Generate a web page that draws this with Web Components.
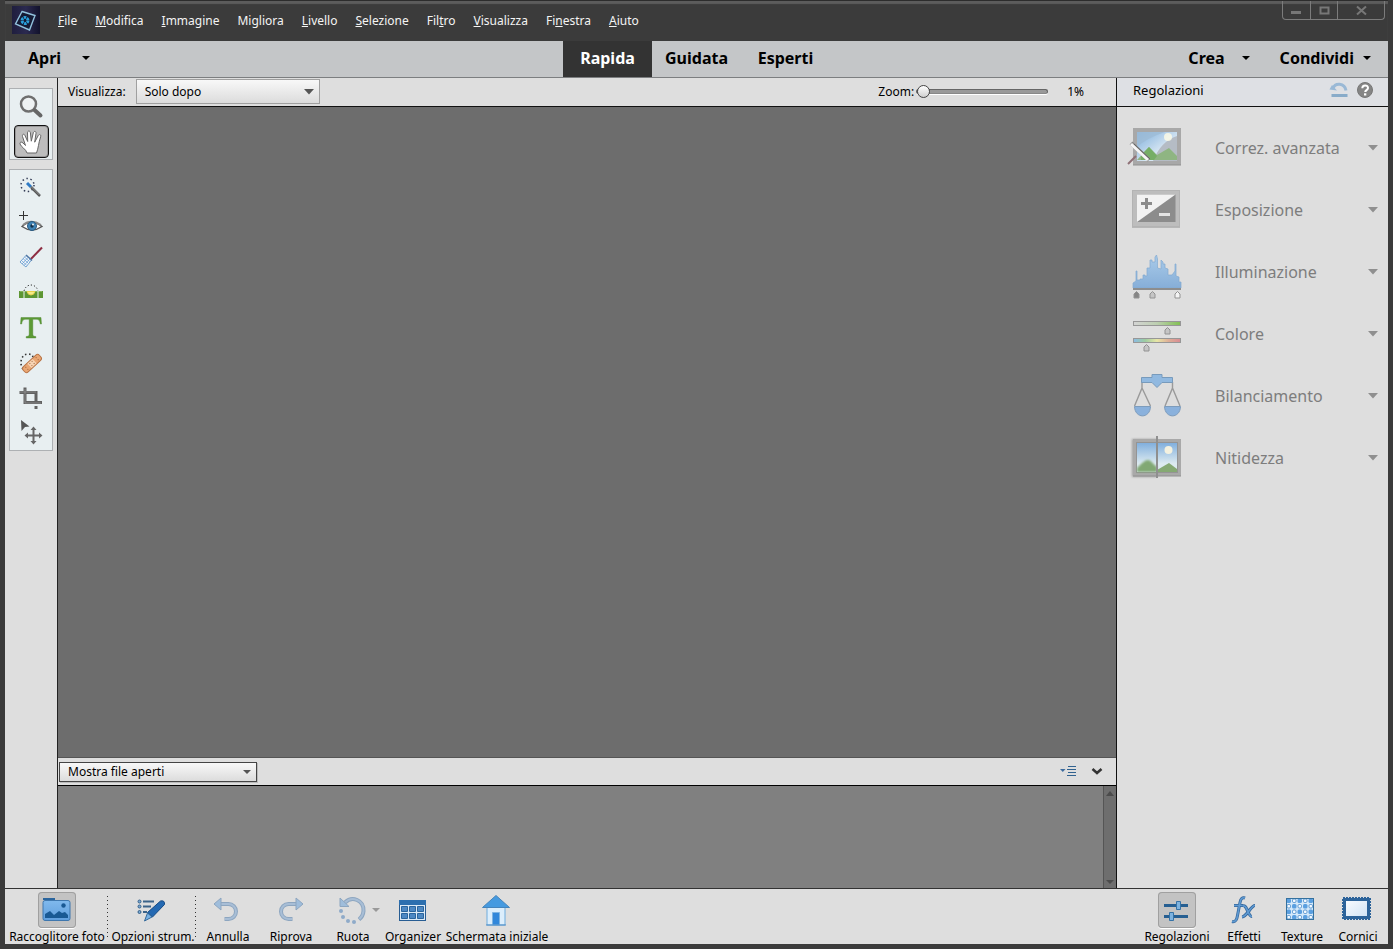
<!DOCTYPE html>
<html lang="it">
<head>
<meta charset="utf-8">
<title>Editor foto</title>
<style>
  html, body { margin: 0; height: 100%; }
  body { background: #3b3b3b; font-family: "Noto Sans", "Open Sans", sans-serif; font-size: 12px; line-height: 16px; color: #000; }
</style>
</head>
<body>
<editor-window></editor-window>

<script>
/* setup runs on the cloned template before it is attached */
const define = (tag, html, setup) => {
  const tpl = document.createElement('template');
  tpl.innerHTML = html;
  customElements.define(tag, class extends HTMLElement {
    connectedCallback() {
      if (this.shadowRoot) return;
      const content = tpl.content.cloneNode(true);
      if (setup) setup(this, content);
      this.attachShadow({ mode: 'open' }).append(content);
    }
  });
};

/* ---------- icons: [width, height, markup] ---------- */
const frame = (x, y, fill) => `<rect x="${x}" y="${y}" width="48" height="37" fill="${fill}"/><path d="M${x} ${y + 37}h48" stroke="#909090"/>`;
const peg = (x, y, fill) => `<path d="M${x - 2.5} ${y + 6.5}v-4l2.500-2.500 2.500 2.500v4z" fill="${fill}" stroke="#929292"/>`;
const ICONS = {
  logo: [28, 28, `<defs><linearGradient id="g" x2="1" y2="0"><stop stop-color="#1f1e3e"/><stop offset=".5" stop-color="#2b2a50"/><stop offset="1" stop-color="#12122c"/></linearGradient></defs><rect width="28" height="28" fill="url(#g)"/><path d="M10 5.500l13 4-5.500 14.500-14-6z" fill="#151b35" stroke="#92c3de" stroke-width="1.400"/><circle cx="13" cy="14.500" r="3" fill="none" stroke="#2aa0dc" stroke-width="3" stroke-dasharray="2.400 .74"/>`],
  caret: [8, 4, `<path d="M0 0h8L4 4z" fill="currentColor"/>`],
  caretBig: [10, 6, `<path d="M0 0h10L5 5.500z" fill="currentColor"/>`],
  caretUp: [8, 5, `<path d="M0 5h8L4 0z" fill="currentColor"/>`],
  min: [11, 9, `<rect y="5" width="10" height="3" fill="#777"/>`],
  max: [11, 9, `<rect x="1.500" y="1.500" width="8" height="6" fill="none" stroke="#777" stroke-width="2"/>`],
  close: [11, 9, `<path d="M1 .5l9 8M10 .5l-9 8" stroke="#777" stroke-width="2"/>`],
  lens: [26, 26, `<circle cx="10.500" cy="10" r="7.500" fill="#eef2f3" stroke="#6f6f6f" stroke-width="2.500"/><path d="M16.500 16l6 5.500" stroke="#666" stroke-width="4" stroke-linecap="round"/>`],
  hand: [26, 26, `<path d="M9 24c-1-4-6-6-7-9-.6-2 1.600-2.600 3-1l2.500 2.500L4.500 7.500c-.5-2.500 1.700-3 2.500-1l2.700 6L9.500 4c0-2.600 2.600-2.600 2.900-.2l.9 8.400 2-8.400c.7-2.300 3-1.600 2.700.5l-1.300 8.900 3.500-6.600c1.200-2 3.200-.8 2.400 1.200C20.500 14 20.500 19 18.500 24z" fill="#fff" stroke="#666"/>`],
  quick: [26, 26, `<circle cx="9.500" cy="10" r="6.500" fill="none" stroke="#333b55" stroke-width="1.500" stroke-dasharray="1.500 2.600"/><path d="M9 8l4 4" stroke="#2f7ac4" stroke-width="3"/><path d="M13 12l9 9" stroke="#555" stroke-width="2.500"/><path d="M13.500 12l8 8" stroke="#aaa" stroke-width=".7"/>`],
  eye: [26, 26, `<path d="M1 5.500h9M5.500 1v9" stroke="#333"/><path d="M4 16.500Q13 8 24 16.500 14 23.500 4 16.500z" fill="#fff" stroke="#555" stroke-width="1.400"/><path d="M5 15Q13 8.500 23 15" fill="none" stroke="#888" stroke-width="2"/><circle cx="14" cy="16" r="4.500" fill="#3f83b5" stroke="#2b5c82"/><circle cx="14" cy="16" r="1.700" fill="#12304a"/><circle cx="15" cy="14.500" r=".9" fill="#fff"/>`],
  brush: [26, 26, `<path d="M11 16L24 2.500" stroke="#8e2d42" stroke-width="2"/><path d="M2 17l6-6.500 5.500 4.500L8 22z" fill="#f4f8fc" stroke="#75a5d0"/><path d="M3.500 15.500l5 4.500M5 13.500l5 4.500M6.500 12l5 4.500M4 19l6-6.500M6 20.500l6-6.500" stroke="#6ca0d2" stroke-width=".8"/><path d="M8 10l6 5.500" stroke="#5177a5" stroke-width="1.500"/>`],
  level: [26, 26, `<path d="M6 11C8 3 18 3 20 11" fill="none" stroke="#333" stroke-dasharray="1.200 2"/><path d="M1 11h24v7H1z" fill="#5d9633"/><path d="M2 11.500h22" stroke="#86b45c"/><path d="M6 11v7M20 11v7" stroke="#e8efef"/><path d="M9 11.500h8q-1 3.500-4 3.500t-4-3.500z" fill="#f6ea8a" stroke="#e9d24d"/>`],
  type: [26, 26, `<path d="M3 2.500h20l.5 6.500h-1.200C21.800 5.500 21 4.300 18 4.300h-3.200V19c0 2 1 2.300 3 2.500V23H8.200v-1.500c2-.2 3-.5 3-2.500V4.300H8C5 4.300 4.200 5.500 3.700 9H2.500z" fill="#5c9a35" stroke="#46822a" stroke-width=".4"/>`],
  heal: [26, 26, `<path d="M5 19C1 14 3 4 10 4q4 0 5 3" fill="none" stroke="#333" stroke-width="1.600" stroke-dasharray="1.500 2.500"/><g transform="rotate(-43 14 13.500)"><rect x="3" y="10" width="22" height="7" rx="2.500" fill="#e9a673" stroke="#b87344"/><rect x="10.500" y="10.500" width="7" height="6" fill="#f7d4b4"/><path d="M12 12h1m2 0h1m-4 3h1m2 0h1M6.500 12h1m-1 3h1m13-3h1m-1 3h1" stroke="#9a633c"/></g>`],
  crop: [26, 26, `<path d="M1.500 7.500h16.500v10M7 2.500v15h17" fill="none" stroke="#626262" stroke-width="3"/><path d="M18 21v3" stroke="#626262" stroke-width="3"/><path d="M2 7h16M7 4v14h16" fill="none" stroke="#999" stroke-width=".7"/>`],
  move: [26, 26, `<path d="M3 0l8.500 6.500-4.500.5L3.500 11z" fill="#555"/><path d="M15.500 8v15M8 15.500h15" stroke="#666" stroke-width="2"/><path d="M12.500 10l3-3.500 3 3.500zM12.500 21l3 3.500 3-3.500zM10 12.500L6.500 15.500l3.500 3zM21 12.500l3.500 3-3.500 3z" fill="#666"/>`],
  reset: [20, 16, `<path d="M4 6.500C6 .5 15.500 .5 17 8.500" fill="none" stroke="#9ab9d6" stroke-width="3"/><path d="M.5 7.500L3 3l5 5.500z" fill="#9ab9d6"/><path d="M2.500 13.500h16" stroke="#88abc9" stroke-width="3"/>`],
  help: [16, 16, `<circle cx="8" cy="8" r="7.500" fill="#858585" stroke="#777"/><path d="M5.300 6.200C5.300 2.500 11 2.600 11 6c0 2-2.800 2.200-2.800 4" fill="none" stroke="#fff" stroke-width="2"/><rect x="7" y="11.300" width="2.300" height="2.200" fill="#fff"/>`],
  smart: [60, 50, `<defs><linearGradient id="s" x2="1" y2="1"><stop stop-color="#7daedb"/><stop offset=".6" stop-color="#d5e5f2"/></linearGradient></defs>${frame(6, 5, '#a8a8a8')}<rect x="10" y="9" width="40" height="29" fill="url(#s)"/><path d="M10 9h28Q20 15 10 24z" fill="#9dbbd6" opacity=".8"/><path d="M50 13Q34 18 26 38h24z" fill="#b5bcc5"/><circle cx="41" cy="14" r="4" fill="#fffce6" opacity=".8"/><path d="M10 37l12-13 8 8 12-7 8 8v4z" fill="#8fb582"/><path d="M14 32l8-8 8 9-3 4H14z" fill="#76ae66"/><path d="M1 41l8-8" stroke="#8f7076" stroke-width="2"/><path d="M4 20l18 17" stroke="#8b8b8b" stroke-width="4"/><path d="M4 21l17 16" stroke="#f6f6f6" stroke-width="3"/><path d="M7 21l16 15" stroke="#666"/>`],
  exposure: [60, 50, `${frame(5, 5, '#bdbdbd')}<rect x="5.500" y="5.500" width="47" height="36" fill="none" stroke="#b3b3b3"/><path d="M10 9.500h38.500V37H10z" fill="#8c8c8c"/><path d="M10 9.500h38.500L10 37z" fill="#f2f2f2"/><path d="M14 18.500h11M19.500 13v11" stroke="#8c8c8c" stroke-width="3"/><path d="M32 29.500h11" stroke="#e4e4e4" stroke-width="3"/>`],
  lighting: [60, 50, `<defs><linearGradient id="l" x2="0" y2="1"><stop stop-color="#a9cbe9"/><stop offset="1" stop-color="#86aed8"/></linearGradient></defs><path d="M6 41V36L9 34V24H10V33H13V32H16V28H18V29H20V21H23V13H25V15H28V10L29.500 8L30.500 12V21L34 22V13L36 15V17H38V21L41 22V28H45L48 24V17H49V29L52 30V35H54V41Z" fill="url(#l)" stroke="#83abd1" stroke-width=".7"/><path d="M6 42h48" stroke="#8d8d8d" stroke-width="2"/>${peg(9.5, 44.5, '#858585')}${peg(25.5, 44.5, '#c5c5c5')}${peg(50.5, 44.5, '#f5f5f5')}`],
  color: [60, 50, `<defs><linearGradient id="a"><stop stop-color="#d4d4d4"/><stop offset=".5" stop-color="#bdcfb1"/><stop offset="1" stop-color="#82c052"/></linearGradient><linearGradient id="b"><stop stop-color="#8bbbe5"/><stop offset=".25" stop-color="#9dcca0"/><stop offset=".5" stop-color="#e8e6a6"/><stop offset=".75" stop-color="#deae97"/><stop offset="1" stop-color="#d98b93"/></linearGradient></defs><rect x="6.500" y="12.500" width="47" height="4" fill="url(#a)" stroke="#979797"/>${peg(40.5, 18.5, '#c5c5c5')}<rect x="6.500" y="29.500" width="47" height="4" fill="url(#b)" stroke="#979797"/>${peg(19.5, 35.5, '#c5c5c5')}`],
  balance: [60, 50, `<path d="M15 11v6L7.500 35M15 17l8.500 18M45.500 11v6L38 35M45.500 17L53 35" fill="none" stroke="#9a9a9a" stroke-width="1.400"/><path d="M14.500 6.500H25v-3h10v3h10.500v5H35l-5 5-5-5H14.500z" fill="#91b9e0" stroke="#789bbc"/><path d="M7.500 35.500h16c-.5 12.500-15.500 12.500-16 0zM37.500 35.500h16c-.5 12.500-15.500 12.500-16 0z" fill="#8ab1dc" stroke="#7d9cbc"/>`],
  sharpen: [60, 50, `<defs><linearGradient id="n" x2="0" y2="1"><stop stop-color="#7faedd"/><stop offset=".7" stop-color="#dceaf0"/></linearGradient><filter id="f"><feGaussianBlur stdDeviation="1"/></filter></defs><rect x="5" y="6" width="25" height="38" fill="#a0a0a0" filter="url(#f)"/>${frame(6, 6, '#a9a9a9')}<rect x="9.500" y="9.500" width="41" height="30" fill="url(#n)" stroke="#949494"/><path d="M10 39v-4c5-5 8-8 11-8s5 4 9 7v5z" fill="#81a873" filter="url(#f)"/><path d="M30 39v-2l12-7 8 6v3z" fill="#85a973"/><circle cx="41.500" cy="17" r="4" fill="#f4f1df"/><path d="M30 3v42" stroke="#8f8f8f" stroke-width="2"/>`],
  list: [18, 14, `<path d="M0 4h5.500L2.800 7z" fill="#3d6b9d"/><path d="M8 1.500h8M7 4.500h9M8 7.500h8M7 10.500h9" stroke="#31628f"/>`],
  chevron: [12, 8, `<path d="M1.500 1L6 5l4.500-4" fill="none" stroke="#333" stroke-width="2.500"/>`],
  bin: [38, 36, `<defs><linearGradient id="p" x2="0" y2="1"><stop stop-color="#80b9ed"/><stop offset="1" stop-color="#5f9edd"/></linearGradient></defs><path d="M5 8V6h12v2" fill="#2b659d"/><rect x="5" y="8.500" width="27" height="20" rx="2" fill="url(#p)" stroke="#3f77ae"/><path d="M7 26v-4l5-3 4 4 5-4 3 2 3-1 3 3v3z" fill="#195994"/><circle cx="25.500" cy="13.500" r="2.200" fill="#195994"/>`],
  options: [38, 36, `<g fill="#79a9d3" stroke="#345f89"><circle cx="5.500" cy="9.500" r="1.500"/><circle cx="5.500" cy="14.500" r="1.500"/><circle cx="5.500" cy="20" r="1.500"/></g><path d="M9 9.500h11M9 14.500h8M9 20h4" stroke="#3b6389" stroke-width="2"/><path d="M13.500 20.500L26.500 9q4.500-1 4 3.500L18.500 25z" fill="#2469b2" stroke="#164a83"/><path d="M13.500 21l4.500 4-7.500 4z" fill="#79b2e4" stroke="#33689a"/>`],
  undo: [38, 36, `<path d="M11 12h8.500a7.500 7.500 0 0 1 0 15h-4" fill="none" stroke="#8da6c0" stroke-width="4"/><path d="M11 12h8.500a7.500 7.500 0 0 1 0 15h-3.500" fill="none" stroke="#a8bed6" stroke-width="2"/><path d="M5 12L12 6v12z" fill="#9fbddb" stroke="#8da6c0"/>`],
  redo: [38, 36, `<path d="M25 12h-8.500a7.500 7.500 0 0 0 0 15h4" fill="none" stroke="#8da6c0" stroke-width="4"/><path d="M25 12h-8.500a7.500 7.500 0 0 0 0 15h3.500" fill="none" stroke="#a8bed6" stroke-width="2"/><path d="M31 12L24 6v12z" fill="#9fbddb" stroke="#8da6c0"/>`],
  rotate: [38, 36, `<path d="M11 10.500C18 3.500 30 8 29.500 19c-.3 4-2 6.500-4.500 8.500" fill="none" stroke="#8da6c0" stroke-width="4"/><path d="M11 10.500C18 3.500 30 8 29.500 19c-.3 4-2 6-4 8" fill="none" stroke="#a8bed6" stroke-width="2"/><path d="M6 6v8.500h9z" fill="#9fbddb" stroke="#8da6c0"/><g fill="#8fabc9"><circle cx="7" cy="19" r="2"/><circle cx="9" cy="25" r="2"/><circle cx="14" cy="29" r="2"/><circle cx="20" cy="30" r="2"/></g>`],
  organizer: [38, 36, `<rect x="5.500" y="8.500" width="26" height="20" fill="#dceaf6" stroke="#285d93"/><path d="M5 8h27v5H5z" fill="#2c6faf"/><g fill="#4d88c3" stroke="#2a659d"><path d="M7.500 14.500h6v5h-6zM15.500 14.500h6v5h-6zM23.500 14.500h6v5h-6zM7.500 21.500h6v5h-6zM15.500 21.500h6v5h-6zM23.500 21.500h6v5h-6z"/></g>`],
  home: [38, 36, `<path d="M9 15h18v18H9z" fill="#dceefc" stroke="#6eacdd"/><path d="M18 3.500L4.500 15.500h27z" fill="#459ae0" stroke="#4584bb"/><path d="M14.500 20.500h7V33h-7z" fill="#3187da" stroke="#7eb4e2"/><path d="M8 33h20" stroke="#4e8dc6"/>`],
  sliders: [38, 36, `<path d="M6 13.500h24M6 24.500h24" stroke="#265f92" stroke-width="3"/><path d="M18.500 9.500h4v8h-4zM11.500 20.500h4v8h-4z" fill="#7db2df" stroke="#3673a7"/>`],
  fx: [38, 36, `<path d="M7 29.500c4 1 5-3 5.500-6L15 10.500c.7-4 2.500-5.500 5-4.500M9 13.500h9" fill="none" stroke="#33659a" stroke-width="3"/><path d="M7 29.500c4 1 5-3 5.500-6L15 10.500c.7-4 2.500-5.500 5-4.500M9 13.500h9" fill="none" stroke="#5f9ad2" stroke-width="1.600"/><path d="M18 14c4-2 5 11 9 10.500M30 13.500c-4 0-8 11-13 11.500" fill="none" stroke="#33659a" stroke-width="3.200"/><path d="M18 14c4-2 5 11 9 10.500M30 13.500c-4 0-8 11-13 11.500" fill="none" stroke="#5f9ad2" stroke-width="1.700"/>`],
  texture: [38, 36, `<defs><pattern id="t" x="3" y="6" width="11" height="11" patternUnits="userSpaceOnUse"><rect width="11" height="11" fill="#d5e9fa"/><rect x=".5" y=".5" width="4.500" height="4.500" rx="1.500" fill="#5a9fe0"/><rect x="6" y="6" width="4.500" height="4.500" rx="1.500" fill="#5a9fe0"/><g fill="#f4faff" stroke="#5795d0"><rect x="6.500" y="1" width="3.500" height="3.500" rx="1.200"/><rect x="1" y="6.500" width="3.500" height="3.500" rx="1.200"/></g></pattern></defs><rect x="3.500" y="6.500" width="27" height="21" fill="url(#t)" stroke="#34719f"/>`],
  frame: [38, 36, `<defs><linearGradient id="r" x2="1" y2="1"><stop stop-color="#fafcff"/><stop offset="1" stop-color="#cfe2f4"/></linearGradient></defs><rect x="5.500" y="7.500" width="24" height="18" fill="url(#r)" stroke="#2c639a" stroke-width="3"/><rect x="4" y="6" width="27" height="21" fill="none" stroke="#2c639a" stroke-width="2" stroke-dasharray="2 1"/>`]
};

define('ui-icon', `<style>:host{display:block;flex:none;line-height:0}svg{display:block;overflow:visible}</style>`, (el, root) => {
  const [w, h, body] = ICONS[el.getAttribute('name')];
  const art = document.createElement('template');
  art.innerHTML = `<svg width="${w}" height="${h}" viewBox="0 0 ${w} ${h}" aria-hidden="true">${body}</svg>`;
  root.append(art.content);
});

define('menu-bar', `<style>
  :host{display:flex;align-items:flex-start;height:41px;box-sizing:border-box;background:#3b3b3b;border-top:1px solid #2c2c2c;box-shadow:inset 0 3px 1px #5c5c5c;padding:0 3px 0 7px}
  ui-icon{margin-top:5px}
  nav{display:flex;gap:18px;flex:1;padding:12px 0 0 18px}
  a{color:#f4f4f4;text-decoration:none}
  .win{display:flex;border:1px solid #7c7c7c;border-top:0;border-radius:0 0 4px 4px;height:18px}
  .win button{all:unset;display:flex;align-items:center;justify-content:center;width:27px}
  .win button:last-child{width:46px}
  .win button+button{border-left:1px solid #7c7c7c;width:26px}
  .win ui-icon{margin:0}
</style>
<ui-icon name="logo"></ui-icon>
<nav aria-label="Menu">
<a href="#"><u>F</u>ile</a><a href="#"><u>M</u>odifica</a><a href="#"><u>I</u>mmagine</a><a href="#">Mi<u>g</u>liora</a><a href="#"><u>L</u>ivello</a><a href="#"><u>S</u>elezione</a><a href="#">Fil<u>t</u>ro</a><a href="#"><u>V</u>isualizza</a><a href="#">Fi<u>n</u>estra</a><a href="#"><u>A</u>iuto</a>
</nav>
<div class="win"><button aria-label="Riduci"><ui-icon name="min"></ui-icon></button><button aria-label="Ingrandisci"><ui-icon name="max"></ui-icon></button><button aria-label="Chiudi"><ui-icon name="close"></ui-icon></button></div>`);

define('mode-bar', `<style>
  :host{display:grid;grid-template-columns:1fr auto 1fr;height:36px;background:#c4c6c8;border-bottom:1px solid #7c7e80;font-size:16px;font-weight:700;line-height:34px}
  button{all:unset;display:flex;align-items:center;cursor:default;padding-bottom:2px}
  .left,.right{display:flex}
  .left{padding-left:23px}
  .left button{gap:21px}
  .right{justify-content:flex-end;gap:30px;padding-right:17px}
  .right button{gap:17px}
  .right button:last-child{gap:9px}
  .tabs{display:flex}
  .tabs button{width:89px;justify-content:center}
  .tabs button[aria-selected=true]{background:#333;color:#fff}
</style>
<div class="left"><button><span>Apri</span><ui-icon name="caret"></ui-icon></button></div>
<div class="tabs" role="tablist"><button role="tab" aria-selected="true">Rapida</button><button role="tab">Guidata</button><button role="tab">Esperti</button></div>
<div class="right"><button><span>Crea</span><ui-icon name="caret"></ui-icon></button><button><span>Condividi</span><ui-icon name="caret"></ui-icon></button></div>`);

define('tool-button', `<style>
  :host{display:flex;height:35px;align-items:center;justify-content:center}
  button{all:unset;display:flex;align-items:center;justify-content:center;box-sizing:border-box;width:35px;height:33px}
  :host([active]) button{background:#bdbdbd;border:1px solid #111;border-radius:4px;box-shadow:inset 0 0 0 1px #999}
</style><button><ui-icon></ui-icon></button>`, (el, root) => {
  root.querySelector('ui-icon').setAttribute('name', el.getAttribute('icon'));
  root.querySelector('button').setAttribute('aria-label', el.getAttribute('label'));
});

define('tool-box', `<style>
  :host{display:flex;flex-direction:column;gap:9px;width:44px;padding:10px 4px 0;background:#dedede;border-right:1px solid #222}
  div{border:1px solid #adb0b3;background:#e8eff1}
</style>
<div><tool-button icon="lens" label="Zoom"></tool-button><tool-button icon="hand" label="Mano" active></tool-button></div>
<div><tool-button icon="quick" label="Selezione rapida"></tool-button><tool-button icon="eye" label="Occhi rossi"></tool-button><tool-button icon="brush" label="Sbianca denti"></tool-button><tool-button icon="level" label="Raddrizza"></tool-button><tool-button icon="type" label="Testo"></tool-button><tool-button icon="heal" label="Correttivo"></tool-button><tool-button icon="crop" label="Taglierina"></tool-button><tool-button icon="move" label="Sposta"></tool-button></div>`);

define('drop-down', `<style>
  :host{display:grid;align-items:center;box-sizing:border-box;background:linear-gradient(#f8f8f8,#dcdcdc);border:1px solid #a0a0a0}
  select,ui-icon{grid-area:1/1}
  select{appearance:none;border:0;background:none;margin:0;padding:0 24px 0 8px;width:100%;height:100%;font:inherit;color:inherit;outline:0}
  ui-icon{justify-self:end;margin-right:5px;color:#555;pointer-events:none}
</style><select><option></option></select><ui-icon></ui-icon>`, (el, root) => {
  root.querySelector('option').textContent = el.getAttribute('value');
  root.querySelector('select').setAttribute('aria-label', el.getAttribute('label'));
  root.querySelector('ui-icon').setAttribute('name', el.getAttribute('arrow') || 'caretBig');
});

define('view-bar', `<style>
  :host{display:flex;align-items:center;height:29px;box-sizing:border-box;background:#dedede;border-bottom:1px solid #111;padding:0 32px 1px 10px}
  drop-down{width:184px;height:25px;margin-left:10px}
  label{margin-left:auto}
  input{appearance:none;width:132px;height:14px;margin:0 19px 0 2px;background:none}
  input::-webkit-slider-runnable-track{height:5px;background:#999;border:1px solid #666;border-bottom-color:#888;border-radius:3px;box-sizing:border-box;box-shadow:0 1px #fff}
  input::-webkit-slider-thumb{appearance:none;width:13px;height:13px;margin-top:-5px;box-sizing:border-box;border:1px solid #444;border-radius:50%;background:linear-gradient(#fff,#d0d0d0)}
</style>
<span>Visualizza:</span><drop-down value="Solo dopo" label="Visualizza"></drop-down>
<label for="z">Zoom:</label><input id="z" type="range" min="1" max="100" value="1"><output for="z">1%</output>`);

define('photo-bin', `<style>
  :host{display:block;border-top:1px solid #555}
  header{display:flex;align-items:center;height:27px;background:#dedede;border-bottom:1px solid #000;padding:0 13px 0 1px}
  drop-down{width:198px;height:20px;border-color:#444;box-shadow:1px 1px #bbb}
  button{all:unset}
  .list{margin-left:auto;margin-right:13px}
  .body{display:flex;justify-content:flex-end;height:102px;background:#808080}
  .scroll{display:flex;flex-direction:column;justify-content:space-between;align-items:center;width:13px;padding:5px 0 4px;border-left:1px solid #555;box-sizing:border-box;height:100%;background:#6e6e6e;color:#4b4b4b}
</style>
<header><drop-down value="Mostra file aperti" label="Mostra" arrow="caret"></drop-down><button class="list" aria-label="Menu contenitore"><ui-icon name="list"></ui-icon></button><button aria-label="Comprimi"><ui-icon name="chevron"></ui-icon></button></header>
<div class="body"><div class="scroll"><ui-icon name="caretUp"></ui-icon><ui-icon name="caret"></ui-icon></div></div>`);

define('adjust-item', `<style>
  :host{display:block}
  button{all:unset;display:flex;align-items:center;box-sizing:border-box;width:100%;height:62px;padding:0 10px;font-size:16px;line-height:22px;color:#7d7d7d}
  span{flex:1;padding-left:28px}
  .arrow{color:#8f8f8f}
</style><button><ui-icon class="pic"></ui-icon><span><slot></slot></span><ui-icon class="arrow" name="caretBig"></ui-icon></button>`, (el, root) => {
  root.querySelector('.pic').setAttribute('name', el.getAttribute('icon'));
});

define('adjust-panel', `<style>
  :host{display:block;width:271px;border-left:1px solid #111;background:#dedede}
  header{display:flex;align-items:center;height:29px;box-sizing:border-box;padding:0 15px 5px 16px;gap:8px;border-bottom:1px solid #111;background:#dee0e4}
  h2{flex:1;margin:0;font-size:13px;font-weight:400}
  button{all:unset}
  .items{padding-top:10px}
</style>
<header><h2>Regolazioni</h2><button aria-label="Ripristina"><ui-icon name="reset"></ui-icon></button><button aria-label="Aiuto"><ui-icon name="help"></ui-icon></button></header>
<div class="items"><adjust-item icon="smart">Correz. avanzata</adjust-item><adjust-item icon="exposure">Esposizione</adjust-item><adjust-item icon="lighting">Illuminazione</adjust-item><adjust-item icon="color">Colore</adjust-item><adjust-item icon="balance">Bilanciamento</adjust-item><adjust-item icon="sharpen">Nitidezza</adjust-item></div>`);

define('task-button', `<style>
  :host{display:block}
  button{all:unset;display:flex;flex-direction:column;align-items:center;width:100%;white-space:nowrap}
  .pic{border-radius:4px;margin-bottom:1px}
  .icon{position:relative}
  .more{position:absolute;left:38px;top:16px;color:#999}
  :host([active]) .pic{background:#c3c3c3;box-shadow:inset 0 0 0 1px #a0a0a0,0 1px #fff}
</style><button><span class="icon"><ui-icon class="pic"></ui-icon></span><slot></slot></button>`, (el, root) => {
  root.querySelector('.pic').setAttribute('name', el.getAttribute('icon'));
  if (el.hasAttribute('more')) root.querySelector('.icon').insertAdjacentHTML('beforeend', '<ui-icon class="more" name="caret"></ui-icon>');
});

define('task-bar', `<style>
  :host{display:flex;justify-content:space-between;height:55px;background:#dedede;border-top:1px solid #333}
  div{display:grid;padding-top:3px}
  .left{grid-template-columns:104px 88px 62px 64px 60px 60px 108px}
  .right{grid-template-columns:70px 64px 52px 60px}
  .rule{position:relative}
  .rule::after{content:"";position:absolute;right:1px;top:4px;width:1px;height:44px;background:repeating-linear-gradient(#333 0 1px,transparent 1px 4px)}
</style>
<div class="left"><task-button class="rule" icon="bin" active>Raccoglitore foto</task-button><task-button class="rule" icon="options">Opzioni strum.</task-button><task-button icon="undo">Annulla</task-button><task-button icon="redo">Riprova</task-button><task-button icon="rotate" more>Ruota</task-button><task-button icon="organizer">Organizer</task-button><task-button icon="home">Schermata iniziale</task-button></div>
<div class="right"><task-button icon="sliders" active>Regolazioni</task-button><task-button icon="fx">Effetti</task-button><task-button icon="texture">Texture</task-button><task-button icon="frame">Cornici</task-button></div>`);

define('editor-window', `<style>
  :host{display:flex;flex-direction:column;box-sizing:border-box;min-height:100%;padding:0 5px 5px;background:#3b3b3b}
  .work{display:flex;flex:1}
  main{display:flex;flex-direction:column;flex:1;min-width:0}
  .canvas{flex:1;background:#6d6d6d}
</style>
<menu-bar></menu-bar><mode-bar></mode-bar>
<div class="work"><tool-box></tool-box><main><view-bar></view-bar><div class="canvas"></div><photo-bin></photo-bin></main><adjust-panel></adjust-panel></div>
<task-bar></task-bar>`);
</script>
</body>
</html>
